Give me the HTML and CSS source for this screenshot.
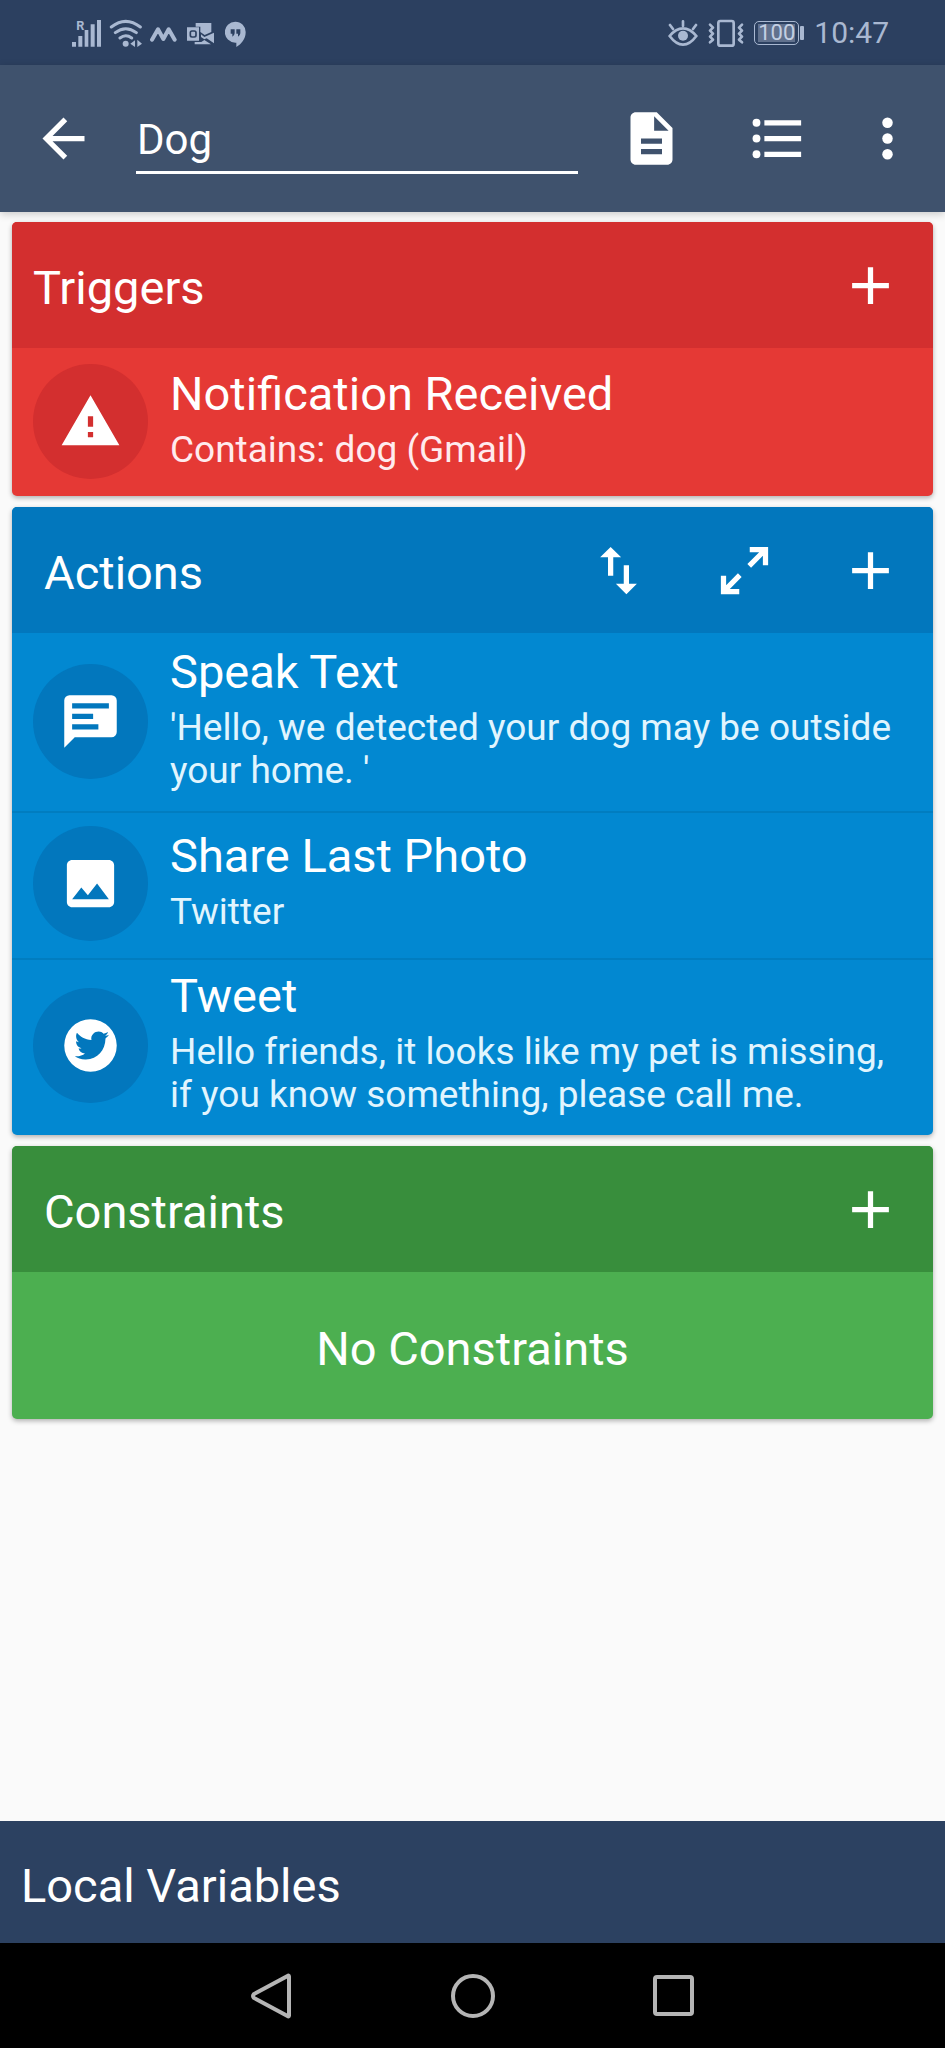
FILE: index.html
```html
<!DOCTYPE html>
<html lang="en">
<head>
<meta charset="utf-8">
<meta name="viewport" content="width=device-width, initial-scale=1">
<title>Dog</title>
<link rel="stylesheet" href="styles.css">
</head>
<body>
<div class="screen">
  <div class="status">
    <div class="status-left">
      <svg class="signal" viewBox="66 54 90 84" width="30" height="28" aria-hidden="true">
        <path d="M66 123h12v14H66zM85 105h12v32H85zM104 87h11v50h-11zM122 70h12v67h-12zM141 57h12v80h-12z"/>
        <text x="79" y="86" class="roaming">R</text>
      </svg>
      <svg class="wifi" viewBox="174 54 102 84" width="34" height="28" aria-hidden="true">
        <g fill="none" stroke="currentColor" stroke-width="9" stroke-linecap="round">
          <path d="M181 78Q224 44 268 78M193 95Q224 71 256 95M207 111Q224 98 242 111"/>
        </g>
        <circle cx="224" cy="128" r="9"/>
        <path d="M238 128l14-10v20zM259 116l14 12-14 10z"/>
      </svg>
      <svg class="wave" viewBox="298 54 81 84" width="27" height="28" aria-hidden="true">
        <path d="M304 116L322 85L338 114L354 85L372 116" fill="none" stroke="currentColor" stroke-width="12" stroke-linejoin="round" stroke-linecap="round"/>
      </svg>
      <svg class="mail" viewBox="408 54 84 84" width="28" height="28" aria-hidden="true">
        <path d="M434 66h47v27l-20 9-13-9V77h-14zM408 79h36v40h-36zM450 100l10 8 29-13v32l-22-15-7 3-10-7zM431 123h20l9-6 20 13h-49z"/>
        <rect x="418" y="90" width="17" height="18" rx="5" fill="none" stroke="#2c4060" stroke-width="5"/>
      </svg>
      <svg class="chat" viewBox="525 54 66 84" width="22" height="28" aria-hidden="true">
        <path d="M556 62a31 31 0 0 1 31 32c0 20-13 36-28 44v-13h-3a31 31 0 0 1 0-63z"/>
        <path d="M542 85h12v12q-1 8-7 10v-9h-5zM559 85h12v12q-1 8-7 10v-9h-5z" fill="#2c4060"/>
      </svg>
    </div>
    <div class="status-right">
      <svg class="eye" viewBox="56 54 90 84" width="30" height="28" aria-hidden="true">
        <g fill="none" stroke="currentColor" stroke-width="8" stroke-linecap="round">
          <path d="M61 105Q80 82 101 82T141 105Q122 131 101 131T61 105zM101 61v14M62 72l9 12M140 72l-9 12"/>
        </g>
        <circle cx="101" cy="104" r="15"/>
      </svg>
      <svg class="vibrate" viewBox="173 54 108 84" width="36" height="28" aria-hidden="true">
        <g fill="none" stroke="currentColor" stroke-width="8" stroke-linecap="round" stroke-linejoin="round">
          <rect x="204" y="60" width="46" height="74" rx="6"/>
          <path d="M179 71l9 9-9 9 9 9-9 9 9 9-9 8M275 71l-9 9 9 9-9 9 9 9-9 9 9 8"/>
        </g>
      </svg>
      <div class="battery"><span class="battery-body"><span class="battery-level">100</span></span><span class="battery-tip"></span></div>
      <time>10:47</time>
    </div>
  </div>

  <header class="appbar">
    <button class="tool" aria-label="Back"><svg class="icon" viewBox="0 0 24 24"><path d="M20 11H7.830l5.590-5.590L12 4l-8 8 8 8 1.410-1.410L7.830 13H20v-2z"/></svg></button>
    <input class="name" type="text" value="Dog" aria-label="Macro name">
    <button class="tool" aria-label="Description"><svg class="icon" viewBox="0 0 24 24"><path d="M14 2H6c-1.100 0-2 .9-2 2v16c0 1.100.9 2 2 2h12c1.100 0 2-.9 2-2V8l-6-6zm2 16H8v-2h8v2zm0-4H8v-2h8v2zm-3-5V3.500L18.500 9H13z"/></svg></button>
    <button class="tool" aria-label="Log"><svg class="icon" viewBox="0 0 24 24"><circle cx="4" cy="6" r="1.500"/><circle cx="4" cy="12" r="1.500"/><circle cx="4" cy="18" r="1.500"/><path d="M7 5h14v2H7zM7 11h14v2H7zM7 17h14v2H7z"/></svg></button>
    <button class="tool more" aria-label="More options"><svg class="icon" viewBox="0 0 24 24"><circle cx="12" cy="6" r="2"/><circle cx="12" cy="12" r="2"/><circle cx="12" cy="18" r="2"/></svg></button>
  </header>

  <main class="cards">
    <section class="card triggers">
      <div class="card-head">
        <h2>Triggers</h2>
        <button class="tool" aria-label="Add trigger"><svg class="icon" viewBox="0 0 24 24"><path d="M19 13h-6v6h-2v-6H5v-2h6V5h2v6h6z"/></svg></button>
      </div>
      <ul class="rows">
        <li class="row">
          <span class="badge"><svg class="icon" viewBox="0 0 24 24"><path d="M1 21h22L12 2 1 21zm12-3h-2v-2h2v2zm0-4h-2v-4h2v4z"/></svg></span>
          <div class="text"><h3>Notification Received</h3><p>Contains: dog (Gmail)</p></div>
        </li>
      </ul>
    </section>

    <section class="card actions">
      <div class="card-head inset">
        <h2>Actions</h2>
        <button class="tool" aria-label="Reorder"><svg class="icon" viewBox="0 0 24 24"><path d="M16 17.010V10h-2v7.010h-3L15 21l4-3.990h-3zM9 3L5 6.990h3V14h2V6.990h3L9 3z"/></svg></button>
        <button class="tool" aria-label="Expand"><svg class="icon" viewBox="0 0 24 24"><path d="M10 21v-2H6.410l4.500-4.500-1.410-1.410-4.500 4.500V14H3v7h7zM14.500 10.910l4.500-4.500V10h2V3h-7v2h3.590l-4.500 4.500 1.410 1.410z"/></svg></button>
        <button class="tool" aria-label="Add action"><svg class="icon" viewBox="0 0 24 24"><path d="M19 13h-6v6h-2v-6H5v-2h6V5h2v6h6z"/></svg></button>
      </div>
      <ul class="rows">
        <li class="row">
          <span class="badge"><svg class="icon" viewBox="0 0 24 24"><path d="M20 2a2 2 0 0 1 2 2v12a2 2 0 0 1-2 2H6l-4 4V4a2 2 0 0 1 2-2h16M5 5v2h14V5H5M5 9v2h8V9H5M5 13v2h10v-2H5z"/></svg></span>
          <div class="text"><h3>Speak Text</h3><p>'Hello, we detected your dog may be outside your home. '</p></div>
        </li>
        <li class="row">
          <span class="badge"><svg class="icon" viewBox="0 0 24 24"><path d="M21 19V5c0-1.100-.9-2-2-2H5c-1.100 0-2 .9-2 2v14c0 1.100.9 2 2 2h14c1.100 0 2-.9 2-2zM8.500 13.500l2.500 3.010L14.500 12l4.500 6H5l3.500-4.500z"/></svg></span>
          <div class="text"><h3>Share Last Photo</h3><p>Twitter</p></div>
        </li>
        <li class="row">
          <span class="badge"><svg class="icon" viewBox="0 0 24 24"><path d="M17.710 9.330C17.640 13.950 14.690 17.110 10.280 17.310C8.460 17.390 7.150 16.810 6 16.080C7.340 16.290 9 15.760 9.900 15C8.580 14.860 7.810 14.190 7.440 13.120C7.820 13.180 8.220 13.160 8.580 13.090C7.390 12.690 6.540 11.950 6.500 10.410C6.830 10.570 7.180 10.710 7.640 10.740C6.750 10.230 6.100 8.380 6.850 7.160C8.170 8.610 9.760 9.790 12.370 9.950C11.710 7.150 15.420 5.630 16.970 7.500C17.630 7.380 18.160 7.140 18.680 6.860C18.470 7.500 18.060 7.970 17.560 8.330C18.100 8.260 18.590 8.130 19 7.920C18.750 8.450 18.190 8.930 17.710 9.330M12 2A10 10 0 0 0 2 12A10 10 0 0 0 12 22A10 10 0 0 0 22 12A10 10 0 0 0 12 2Z"/></svg></span>
          <div class="text"><h3>Tweet</h3><p>Hello friends, it looks like my pet is missing, if you know something, please call me.</p></div>
        </li>
      </ul>
    </section>

    <section class="card constraints">
      <div class="card-head inset">
        <h2>Constraints</h2>
        <button class="tool" aria-label="Add constraint"><svg class="icon" viewBox="0 0 24 24"><path d="M19 13h-6v6h-2v-6H5v-2h6V5h2v6h6z"/></svg></button>
      </div>
      <p class="empty">No Constraints</p>
    </section>
  </main>

  <button class="locals">Local Variables</button>

  <nav class="navbar" aria-label="System">
    <button aria-label="Back"><svg viewBox="0 0 48 48" width="48" height="48"><path d="M40 4.500V43.500Q40 45 38.500 44L5 26Q3 24 5 22L38.500 4Q40 3 40 4.500z"/></svg></button>
    <button aria-label="Home"><svg viewBox="0 0 48 48" width="48" height="48"><circle cx="24" cy="24" r="20"/></svg></button>
    <button aria-label="Recent apps"><svg viewBox="0 0 48 48" width="48" height="48"><rect x="6" y="5" width="37" height="37" rx="2"/></svg></button>
  </nav>
</div>
</body>
</html>
```

FILE: styles.css
```css
* {
  box-sizing: border-box;
}

body {
  margin: 0;
  background: #fafafa;
  color: #fff;
  font-family: Roboto, "Noto Sans", sans-serif;
}

h2,
h3,
p,
ul {
  margin: 0;
  padding: 0;
  font-weight: 400;
}

ul {
  list-style: none;
}

button {
  margin: 0;
  padding: 0;
  border: 0;
  background: none;
  color: inherit;
  font: inherit;
}

svg {
  display: block;
  flex: none;
  fill: currentColor;
}

.icon {
  width: 63px;
  height: 63px;
}

.screen {
  display: flex;
  flex-direction: column;
  min-height: 100vh;
}

/* Status bar */
.status {
  display: flex;
  align-items: center;
  justify-content: space-between;
  height: 65px;
  padding: 0 56px 0 72px;
  background: #2c4060;
  color: #a9b8d1;
}

.status-left,
.status-right {
  display: flex;
  align-items: center;
}

.status-left {
  gap: 7px;
}

.status-right {
  gap: 10px;
}

.mail,
.chat {
  margin-left: 3px;
}

.roaming {
  font-size: 38px;
  font-weight: 700;
}

.battery {
  display: flex;
  align-items: center;
  gap: 1px;
}

.battery-body {
  padding: 2px 3px;
  border: 1px solid #a9b8d1;
  border-radius: 5px;
}

.battery-level {
  display: block;
  background: #61718d;
  color: #c3cfe2;
  font-size: 22px;
  line-height: 18px;
}

.battery-tip {
  width: 4px;
  height: 14px;
  border-radius: 1px;
  background: #a9b8d1;
}

time {
  font-size: 30px;
  line-height: 36px;
}

/* App bar */
.appbar {
  z-index: 1;
  display: flex;
  align-items: center;
  height: 147px;
  padding-right: 11px;
  background: #3f526d;
  box-shadow: 0 2px 8px rgba(0, 0, 0, 0.2);
}

.tool {
  display: flex;
  flex: none;
  align-items: center;
  justify-content: center;
  width: 126px;
  height: 126px;
}

.tool.more {
  width: 94px;
}

.name {
  flex: 1;
  min-width: 0;
  height: 70px;
  margin: 0 10px;
  padding: 4px 1px 0;
  border: 0;
  border-bottom: 3px solid #fff;
  border-radius: 0;
  outline: 0;
  background: none;
  color: #fff;
  font: 42px/50px Roboto, "Noto Sans", sans-serif;
}

/* Cards */
.cards {
  display: flex;
  flex: 1;
  flex-direction: column;
  gap: 11px;
  padding: 10px 12px;
}

.card {
  overflow: hidden;
  border-radius: 5px;
  box-shadow: 0 2px 5px rgba(0, 0, 0, 0.3);
}

.card-head {
  display: flex;
  align-items: center;
  padding-left: 21px;
}

.card-head.inset {
  padding-left: 32px;
}

.card-head h2 {
  flex: 1;
  padding-top: 4px;
  font-size: 47px;
  line-height: 55px;
}

.rows {
  padding-top: 3px;
}

.row {
  display: flex;
  align-items: center;
  gap: 22px;
  min-height: 145px;
  padding: 8px 21px 12px;
}

.row + .row {
  border-top: 2px solid rgba(0, 0, 0, 0.08);
  min-height: 147px;
}

.badge {
  display: flex;
  flex: none;
  align-items: center;
  justify-content: center;
  width: 115px;
  height: 115px;
  border-radius: 50%;
}

.text {
  flex: 1;
  padding-bottom: 7px;
}

.text h3 {
  margin-bottom: 7px;
  font-size: 47px;
  line-height: 55px;
}

.text p {
  font-size: 37px;
  line-height: 43px;
}

.triggers {
  background: #e53935;
}

.triggers .card-head,
.triggers .badge {
  background: #d32f2f;
}

.triggers p {
  color: #ffebee;
}

.actions {
  background: #0288d1;
}

.actions .card-head,
.actions .badge {
  background: #0277bd;
}

.actions p {
  color: #e1f5fe;
}

.constraints {
  background: #4caf50;
}

.constraints .card-head {
  background: #388e3c;
}

.empty {
  padding: 49px 21px 43px;
  font-size: 47px;
  line-height: 55px;
  text-align: center;
}

/* Bottom bars */
.locals {
  height: 122px;
  padding: 6px 21px 0;
  background: #2c4161;
  font-size: 47px;
  line-height: 55px;
  text-align: left;
}

.navbar {
  display: flex;
  justify-content: center;
  height: 105px;
  background: #000;
}

.navbar button {
  display: flex;
  align-items: center;
  justify-content: center;
  width: 200px;
}

.navbar svg {
  fill: none;
  stroke: #b5b5b5;
  stroke-width: 4px;
}
```
